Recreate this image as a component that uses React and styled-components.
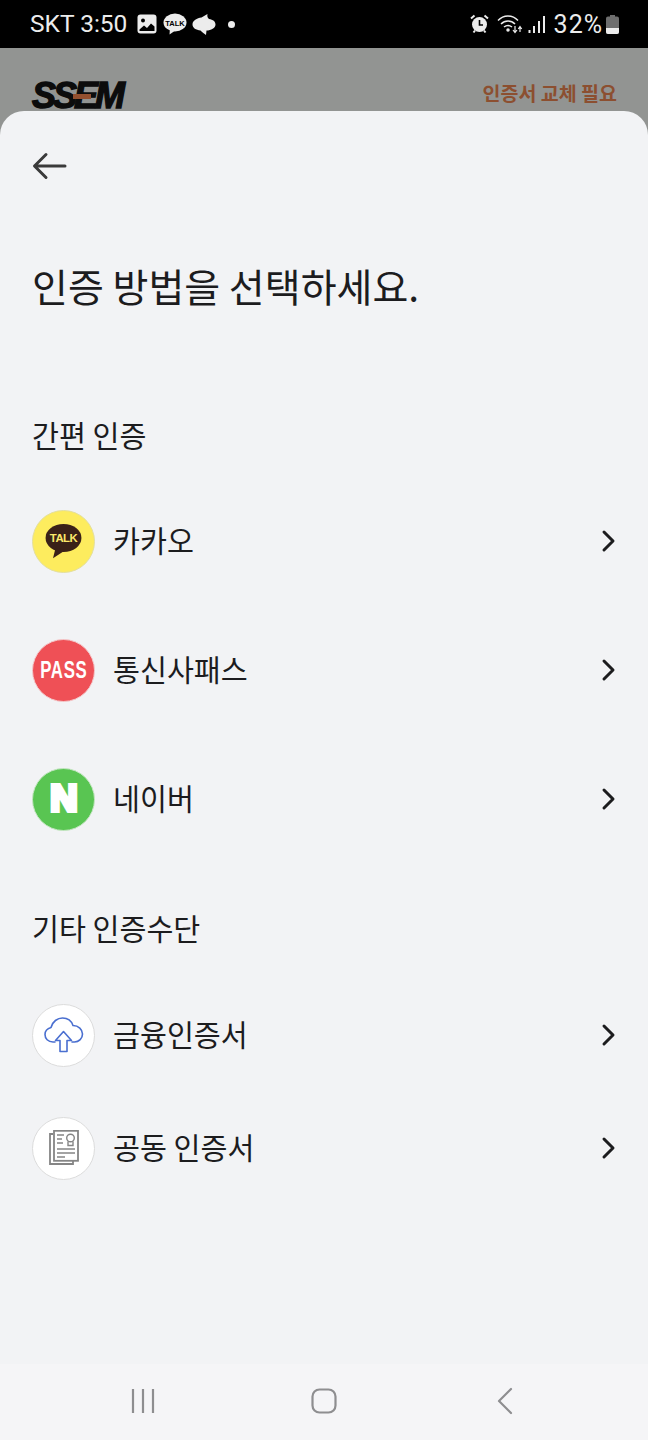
import React from 'react';
import styled, { createGlobalStyle } from 'styled-components';

const GlobalStyle = createGlobalStyle`
  html, body {
    margin: 0;
    padding: 0;
    background: #929492;
  }
  * {
    box-sizing: border-box;
  }
`;

const Screen = styled.div`
  width: 648px;
  height: 1440px;
  display: flex;
  flex-direction: column;
  overflow: hidden;
  background: #929492;
  font-family: 'Noto Sans CJK KR', 'Noto Sans', sans-serif;
  color: #1c1c1e;
`;

const StatusBar = styled.div`
  height: 48px;
  flex: none;
  background: #000;
  color: #ececec;
  display: flex;
  align-items: center;
  justify-content: space-between;
  padding: 0 29px 0 30px;
  font-family: Roboto, 'Noto Sans', sans-serif;
`;

const StatusGroup = styled.div`
  display: flex;
  align-items: center;
`;

const StatusText = styled.span`
  font-size: ${props => props.$size}px;
  letter-spacing: ${props => props.$spacing || 0}px;
  line-height: 1;
  white-space: nowrap;
`;

const StatusIcon = styled.span`
  display: flex;
  margin-left: ${props => props.$left}px;
`;

const StatusDot = styled.span`
  width: 7px;
  height: 7px;
  margin-left: 12px;
  border-radius: 50%;
  background: #ececec;
`;

const Backdrop = styled.div`
  height: 63px;
  flex: none;
  display: flex;
  justify-content: space-between;
  padding: 33px 31px 0 32px;
`;

const Logo = styled.div`
  position: relative;
  height: 30px;
  font-family: 'Liberation Sans', sans-serif;
  font-style: italic;
  font-weight: 700;
  font-size: 36px;
  line-height: 30px;
  letter-spacing: -3px;
  color: #0c0c0c;
  -webkit-text-stroke: 1.4px #0c0c0c;
`;

const LogoBar = styled.span`
  position: absolute;
  left: 41px;
  top: 13px;
  width: 18px;
  height: 4.5px;
  background: #94502f;
`;

const Notice = styled.div`
  font-size: 19.5px;
  font-weight: 700;
  line-height: 26px;
  margin-top: -1px;
  color: #8c4f30;
`;

const Sheet = styled.div`
  flex: 1;
  background: #f2f3f5;
  border-radius: 24px 24px 0 0;
  padding: 41px 32px 0 32px;
  display: flex;
  flex-direction: column;
`;

const BackIcon = styled.svg`
  display: block;
  flex: none;
`;

const Title = styled.h1`
  margin: 79px 0 0 0;
  font-size: 39px;
  font-weight: 400;
  line-height: 52px;
`;

const SectionTitle = styled.h2`
  margin: ${props => props.$top}px 0 0 0;
  font-size: 29.3px;
  font-weight: 400;
  line-height: 40px;
`;

const List = styled.div`
  display: flex;
  flex-direction: column;
  gap: ${props => props.$gap}px;
  margin-top: ${props => props.$top}px;
`;

const Row = styled.div`
  display: flex;
  align-items: center;
  height: 64px;
  gap: 18px;
`;

const Badge = styled.div`
  width: 63px;
  height: 63px;
  flex: none;
  border-radius: 50%;
  display: flex;
  align-items: center;
  justify-content: center;
  background: ${props => props.$bg};
  border: 1px solid ${props => props.$line};
`;

const Label = styled.span`
  flex: 1;
  font-size: 29.3px;
  line-height: 40px;
  margin-bottom: 4px;
`;

const Chevron = styled.svg`
  flex: none;
`;

const PassText = styled.span`
  font-family: 'Liberation Sans', sans-serif;
  font-weight: 700;
  font-size: 24px;
  letter-spacing: 1px;
  color: #fff;
  transform: scaleX(0.7);
`;

const NaverText = styled.span`
  font-family: 'Liberation Sans', sans-serif;
  font-weight: 700;
  font-size: 36px;
  line-height: 1;
  color: #fff;
  -webkit-text-stroke: 4px #fff;
  transform: scaleX(1.05);
`;

const NavBar = styled.div`
  height: 76px;
  flex: none;
  background: #f5f5f7;
  display: grid;
  grid-template-columns: repeat(3, 1fr);
  align-items: center;
  justify-items: center;
  padding: 0 52px 2px 52px;
`;

const GalleryIcon = () => (
  <svg width="20" height="20" viewBox="0 0 20 20">
    <rect x="0.5" y="0.5" width="19" height="19" rx="3" fill="#ececec" />
    <circle cx="6" cy="6.5" r="2" fill="#000" />
    <path d="M2.5 15.5 L7 11.5 L10 14 L14 9.5 L17.5 12.5 V17 H2.5 Z" fill="#000" />
  </svg>
);

const TalkBubble = () => (
  <svg width="24" height="22" viewBox="0 0 24 22">
    <ellipse cx="12" cy="9.5" rx="11.5" ry="9" fill="#ececec" />
    <path d="M7 15 L6.5 21.5 L13 17 Z" fill="#ececec" />
    <text x="12" y="12.5" textAnchor="middle" fontFamily="Liberation Sans" fontWeight="700" fontSize="7.5" fill="#000">TALK</text>
  </svg>
);

const SwirlIcon = () => (
  <svg width="24" height="23" viewBox="0 0 24 23" fill="#ececec">
    <path d="M0.5 11.5 C0.5 7.5 5 5 9.5 4.5 L15.5 1 C15 3 15.5 5 17 6 C21 6.5 23.5 8.5 23.5 11.5 C23.5 15 19 17.5 14.5 17.5 L14 22 C12.5 21 10 19 8.5 17.5 C4 17 0.5 15 0.5 11.5 Z" />
  </svg>
);

const AlarmIcon = () => (
  <svg width="19" height="20" viewBox="0 0 19 20">
    <circle cx="9.5" cy="10.5" r="7.5" fill="#ececec" />
    <path d="M9.5 6 V11 H13" stroke="#000" strokeWidth="1.6" fill="none" />
    <path d="M1 4.5 L4.5 1.5 M18 4.5 L14.5 1.5 M3.5 18.5 L5 16.5 M15.5 18.5 L14 16.5" stroke="#ececec" strokeWidth="2" />
  </svg>
);

const WifiIcon = () => (
  <svg width="26" height="20" viewBox="0 0 26 20" fill="none" stroke="#ececec" strokeWidth="1.5">
    <path d="M1 6.5 C6.5 0.5 15.5 0.5 21 6.5" />
    <path d="M4 10 C8 6 14 6 18 10" />
    <path d="M7 13 C9.5 11 12.5 11 15 13" />
    <circle cx="11" cy="16" r="1" fill="#ececec" />
    <path d="M18 12 V18 M16 16 L18 18.5 L20 16" strokeWidth="1.2" />
    <path d="M23 18 V13 M21.3 15 L23 12.5 L24.7 15" strokeWidth="1.2" />
  </svg>
);

const SignalIcon = () => (
  <svg width="18" height="18" viewBox="0 0 18 18" fill="#ececec">
    <rect x="0.5" y="15" width="2" height="3" />
    <rect x="5" y="11" width="2" height="7" />
    <rect x="10" y="6" width="2" height="12" />
    <rect x="15" y="1" width="2" height="17" />
  </svg>
);

const BatteryIcon = () => (
  <svg width="13" height="19" viewBox="0 0 13 19">
    <path d="M4 0 H9 V1.5 H11 Q13 1.5 13 3.5 V17 Q13 19 11 19 H2 Q0 19 0 17 V3.5 Q0 1.5 2 1.5 H4 Z" fill="#6e6e6e" />
    <path d="M0 13 H13 V17 Q13 19 11 19 H2 Q0 19 0 17 Z" fill="#ececec" />
  </svg>
);

const TalkIcon = () => (
  <svg width="37" height="35" viewBox="0 0 42 40">
    <ellipse cx="21" cy="16" rx="20.5" ry="16" fill="#3a2118" />
    <path d="M12 27 L9 39 L23 30 Z" fill="#3a2118" />
    <text x="21" y="21" textAnchor="middle" fontFamily="Liberation Sans" fontWeight="700" fontSize="13" letterSpacing="-0.6" fill="#fde96a">TALK</text>
  </svg>
);

const CloudIcon = () => (
  <svg width="40" height="36" viewBox="0 0 40 36" fill="none" stroke="#4a6fd0" strokeWidth="1.6" strokeLinejoin="round" strokeLinecap="round">
    <path d="M11 25 H9 C4 25 1 21.5 1 17.5 C1 14 3.5 11.5 7 10.5 C8.5 4.5 13.5 1 18.5 1 C23.5 1 27.5 4 29 8.5 C34.5 8.5 38.5 12.5 38.5 17 C38.5 21.5 35 25 30.5 25 H28" />
    <path d="M19.5 14.5 L27.5 23.5 H23 V34.5 H16 V23.5 H11.5 Z" />
  </svg>
);

const CertIcon = () => (
  <svg width="30" height="36" viewBox="0 0 30 36" fill="none" stroke="#858585" strokeWidth="1.4">
    <path d="M4 4 H1 V34 H24 V31" strokeWidth="1.8" />
    <rect x="5" y="0.8" width="24" height="30" fill="#fff" strokeWidth="1.8" />
    <path d="M8 5 H15 M8 9 H13 M8 13 H14 M8 19 H26 M8 23 H26 M8 27 H16" />
    <circle cx="21.5" cy="8" r="3.8" />
    <path d="M19 11.5 V15.5 H24 V11.5" />
  </svg>
);

const RowChevron = () => (
  <Chevron width="15" height="24" viewBox="0 0 15 24" fill="none" stroke="#1c1c1e" strokeWidth="3" strokeLinecap="round" strokeLinejoin="round">
    <path d="M3 3 L12 12 L3 21" />
  </Chevron>
);

const methods = [
  { key: 'kakao', label: '카카오', bg: '#fdec5e', line: '#e3dfa0', icon: <TalkIcon /> },
  { key: 'pass', label: '통신사패스', bg: '#ef5056', line: '#f4c9cb', icon: <PassText>PASS</PassText> },
  { key: 'naver', label: '네이버', bg: '#59c552', line: '#c5e6c2', icon: <NaverText>N</NaverText> },
];

const others = [
  { key: 'finance', label: '금융인증서', bg: '#fff', line: '#dcdcdc', icon: <CloudIcon /> },
  { key: 'joint', label: '공동 인증서', bg: '#fff', line: '#dcdcdc', icon: <CertIcon /> },
];

const renderRow = item => (
  <Row key={item.key}>
    <Badge $bg={item.bg} $line={item.line}>{item.icon}</Badge>
    <Label>{item.label}</Label>
    <RowChevron />
  </Row>
);

const App = () => {
  return (
    <Screen>
      <GlobalStyle />
      <StatusBar>
        <StatusGroup>
          <StatusText $size={24.5}>SKT 3:50</StatusText>
          <StatusIcon $left={10}><GalleryIcon /></StatusIcon>
          <StatusIcon $left={6}><TalkBubble /></StatusIcon>
          <StatusIcon $left={5}><SwirlIcon /></StatusIcon>
          <StatusDot />
        </StatusGroup>
        <StatusGroup>
          <StatusIcon $left={0}><AlarmIcon /></StatusIcon>
          <StatusIcon $left={8}><WifiIcon /></StatusIcon>
          <StatusIcon $left={5}><SignalIcon /></StatusIcon>
          <StatusIcon $left={8}><StatusText $size={25} $spacing={1}>32%</StatusText></StatusIcon>
          <StatusIcon $left={3}><BatteryIcon /></StatusIcon>
        </StatusGroup>
      </StatusBar>
      <Backdrop>
        <Logo>
          SSEM
          <LogoBar />
        </Logo>
        <Notice>인증서 교체 필요</Notice>
      </Backdrop>
      <Sheet>
        <BackIcon width="36" height="28" viewBox="0 0 36 28" fill="none" stroke="#3a3a3a" strokeWidth="3" strokeLinecap="round" strokeLinejoin="round">
          <path d="M33 14 H3 M14 2.5 L2.5 14 L14 25.5" />
        </BackIcon>
        <Title>인증 방법을 선택하세요.</Title>
        <SectionTitle $top={103}>간편 인증</SectionTitle>
        <List $top={55} $gap={65}>{methods.map(renderRow)}</List>
        <SectionTitle $top={76}>기타 인증수단</SectionTitle>
        <List $top={56} $gap={49}>{others.map(renderRow)}</List>
      </Sheet>
      <NavBar>
        <svg width="26" height="26" viewBox="0 0 26 26" stroke="#8e8e90" strokeWidth="2.2">
          <path d="M3 1 V25 M13 1 V25 M23 1 V25" />
        </svg>
        <svg width="26" height="26" viewBox="0 0 26 26" fill="none" stroke="#8e8e90" strokeWidth="2.2">
          <rect x="1.5" y="1.5" width="23" height="23" rx="7" />
        </svg>
        <svg width="18" height="28" viewBox="0 0 18 28" fill="none" stroke="#8e8e90" strokeWidth="2.2" strokeLinecap="round" strokeLinejoin="round">
          <path d="M15 2 L3 14 L15 26" />
        </svg>
      </NavBar>
    </Screen>
  );
};

export default App;
